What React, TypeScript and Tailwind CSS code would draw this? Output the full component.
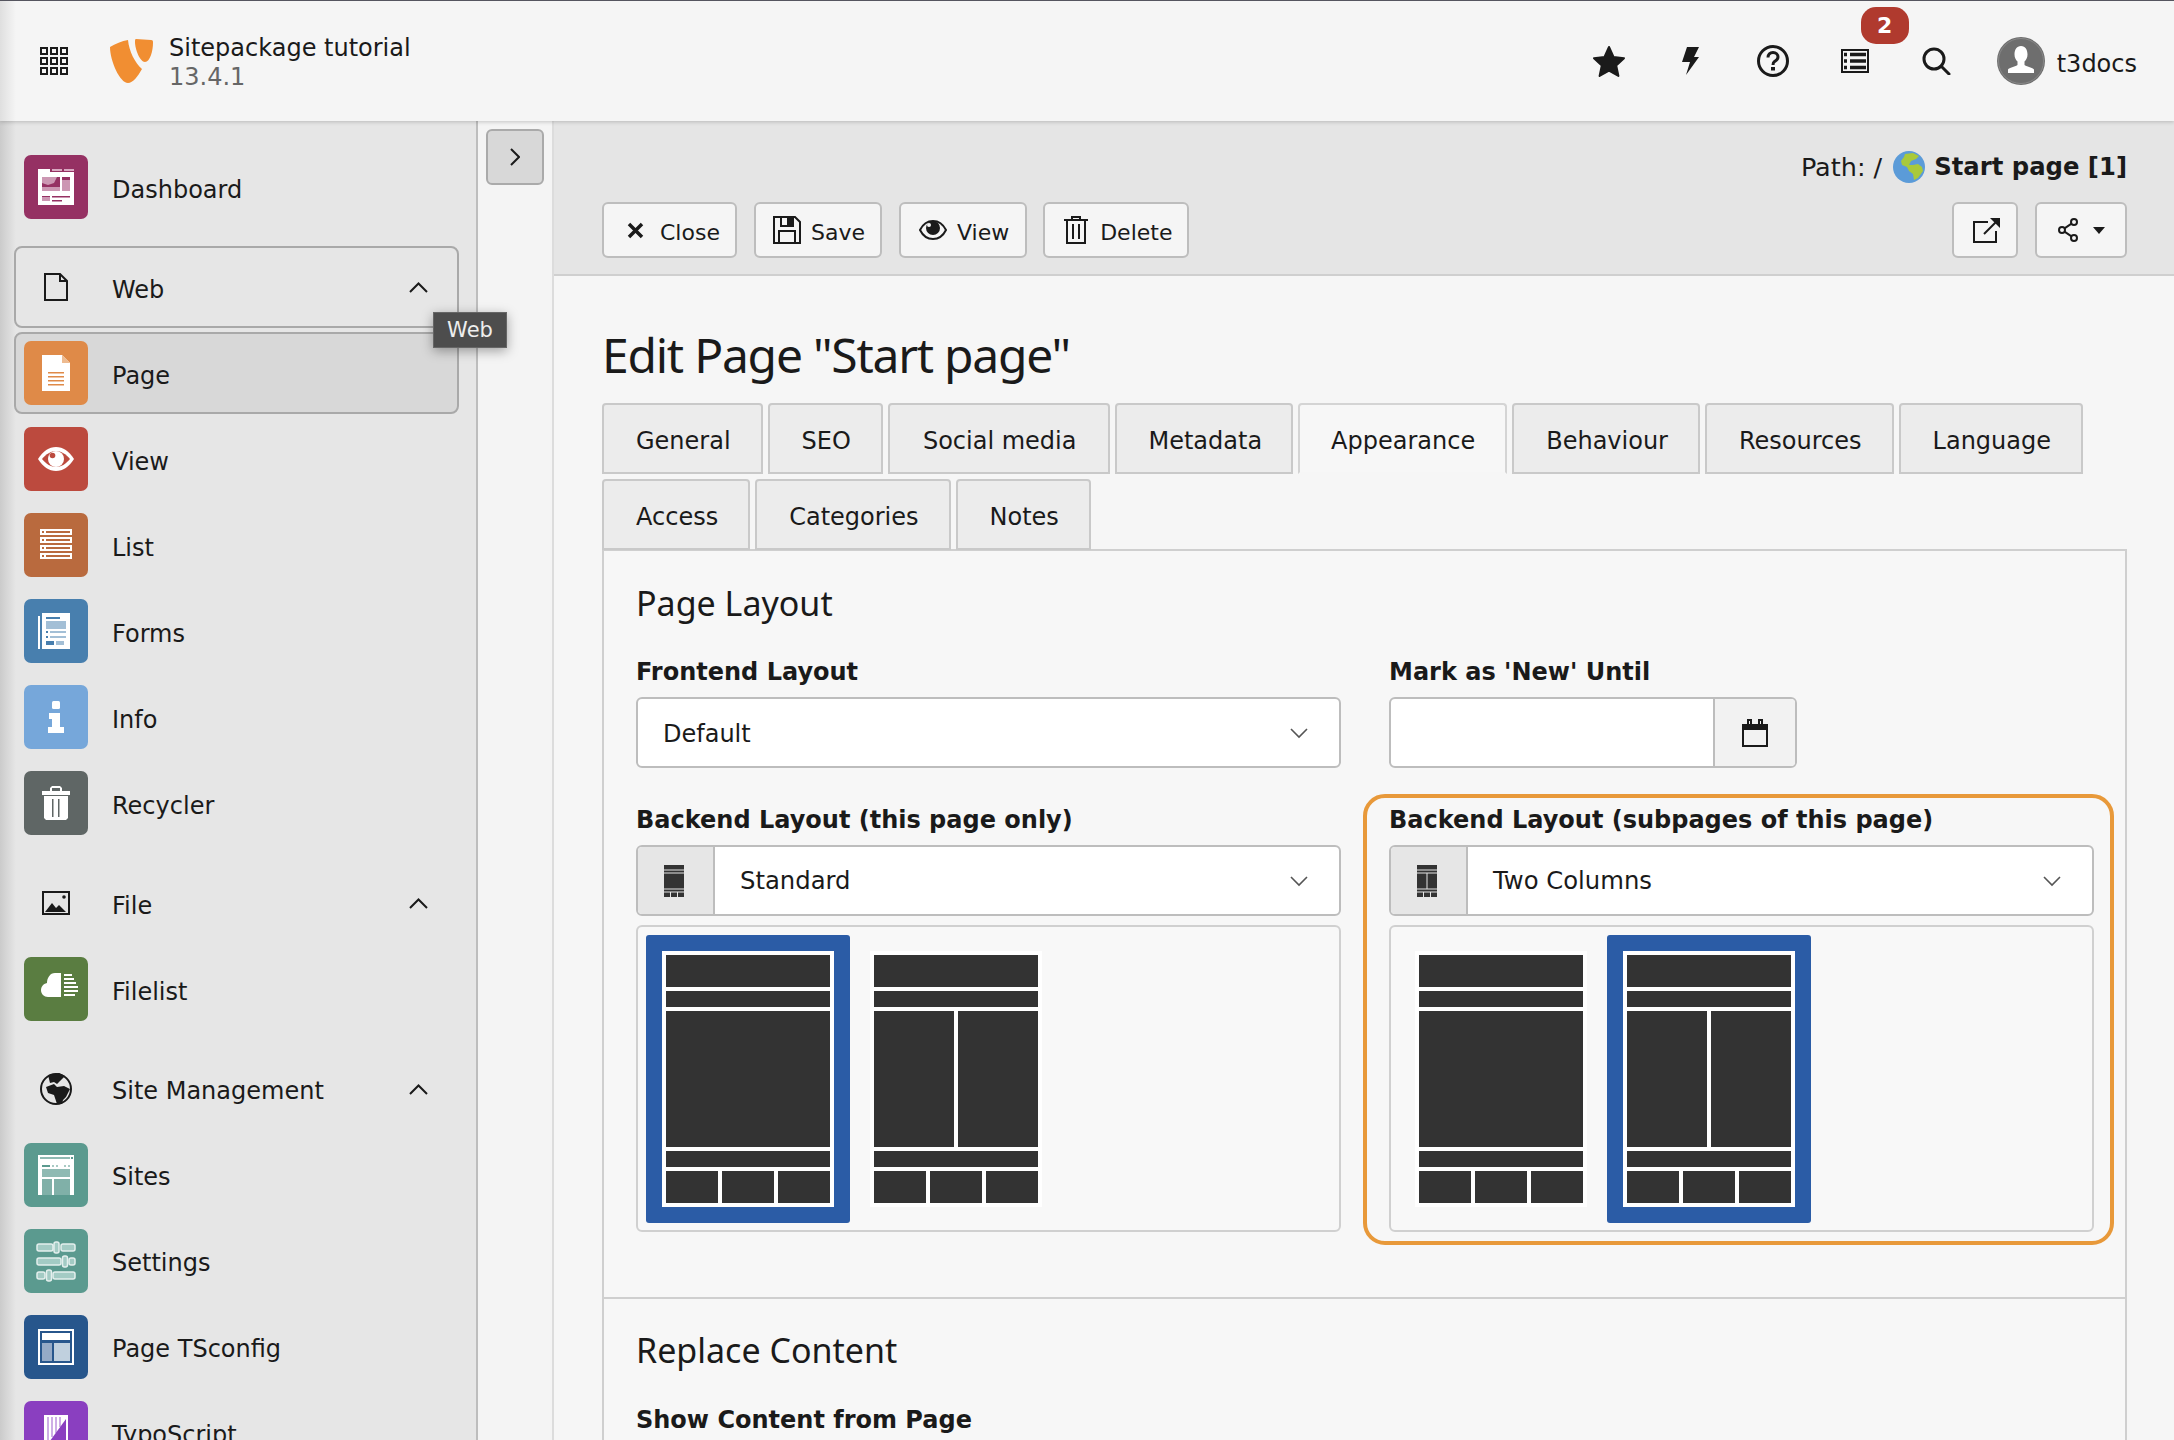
import { ReactNode } from "react";

const dejavu = "font-['DejaVu_Sans',sans-serif]";
const heading = "font-['Noto_Sans',sans-serif]";

function Chevron() {
  return (
    <svg width="19" height="12" viewBox="0 0 19 12" fill="none" stroke="#1a1a1a" strokeWidth="2">
      <path d="M1 11l8.500-8.500L18 11" />
    </svg>
  );
}

function SelectChevron() {
  return (
    <svg width="18" height="12" viewBox="0 0 18 12" fill="none" stroke="#555" strokeWidth="1.6">
      <path d="M1 2l8 8 8-8" />
    </svg>
  );
}

function Tile({ bg, children }: { bg: string; children: ReactNode }) {
  return (
    <div className={`flex h-16 w-16 shrink-0 items-center justify-center rounded-[7px] ${bg}`}>
      <svg width="64" height="64" viewBox="0 0 64 64">
        {children}
      </svg>
    </div>
  );
}

const icons: Record<string, ReactNode> = {
  dashboard: (
    <Tile bg="bg-[#953163]">
      <path d="M14 14h12v3h24v33H14z" fill="#fff" />
      <path d="M28 14h10v2H28zM40 14h10v2H40z" fill="#d9a9c2" />
      <path d="M18 22h18v14H18z" fill="#cc97b3" />
      <path d="M18 28l6 2 6-2 3-6h3v11H18z" fill="#953163" />
      <path d="M18 32h18v4H18z" fill="#cc97b3" />
      <path d="M38 22h8v14h-8z" fill="#cc97b3" />
      <path d="M38 22h8v3h-8z" fill="#953163" />
      <path d="M18 41h8v5h-8z" fill="#cc97b3" />
      <path d="M18 41h8v1H18zM28 41h18v1.500H28zM28 45h10v1.500H28z" fill="#953163" />
    </Tile>
  ),
  page: (
    <Tile bg="bg-[#df8a48]">
      <path d="M18 14h20l8 8v28H18z" fill="#fff" />
      <path d="M38 14l8 8h-8z" fill="#eebb90" />
      <path d="M24 31h16v1.500H24zM24 35h16v1.500H24zM24 39h16v1.500H24zM24 43h16v1.500H24z" fill="#df8a48" />
    </Tile>
  ),
  view: (
    <Tile bg="bg-[#bc4a3e]">
      <path d="M14 32c5-8 11-12 18-12s13 4 18 12c-5 8-11 12-18 12S19 40 14 32z" fill="#fff" />
      <path d="M18 32c4-5 9-8 14-8s10 3 14 8c-4 5-9 8-14 8s-10-3-14-8z" fill="#bc4a3e" />
      <circle cx="32" cy="32" r="8" fill="#fff" />
      <circle cx="28.500" cy="28.500" r="2.800" fill="#bc4a3e" />
    </Tile>
  ),
  list: (
    <Tile bg="bg-[#b96a3e]">
      {[16, 24, 32, 40].map((y) => (
        <g key={y}>
          <rect x="16" y={y} width="32" height="6" fill="#fff" />
          <rect x="18" y={y + 2} width="2" height="2" fill="#b96a3e" />
          <rect x="22" y={y + 2} width="24" height="2" fill="#b96a3e" />
        </g>
      ))}
    </Tile>
  ),
  forms: (
    <Tile bg="bg-[#487fae]">
      <path d="M14 17h2v33h-2z" fill="#fff" />
      <path d="M18 14h28v36H18z" fill="#fff" />
      <path d="M22 18h14v2H22z" fill="#487fae" />
      <path d="M22 22h20v8H22z" fill="#a3bfd6" />
      <path d="M22 32h2v2h-2zM22 37h2v2h-2z" fill="#487fae" />
      <path d="M26 32h16v2H26zM26 37h16v2H26z" fill="#a3bfd6" />
      <path d="M22 42h8v4h-8z" fill="#487fae" />
      <path d="M32 42h8v4h-8z" fill="#a3bfd6" />
    </Tile>
  ),
  info: (
    <Tile bg="bg-[#76a7da]">
      <rect x="28" y="16" width="8" height="8" rx="1.500" fill="#fff" />
      <path d="M25 28h11v14h4v6H24v-6h4v-8h-3z" fill="#fff" />
    </Tile>
  ),
  recycler: (
    <Tile bg="bg-[#5f6665]">
      <path d="M26 20v-3l2-2h8l2 2v3h8v4H18v-4z" fill="#fff" />
      <path d="M28 20v-3h8v3z" fill="#5f6665" />
      <path d="M20 25h24v22l-2 2H22l-2-2z" fill="#fff" />
      <path d="M28 28h1.500v18H28zM34 28h1.500v18H34z" fill="#5f6665" />
    </Tile>
  ),
  filelist: (
    <Tile bg="bg-[#5a7d41]">
      <path d="M37 16h-6c-5 0-8 5-8 10-4 1-6 4-6 7 0 4 3 7 7 7h13z" fill="#fff" />
      <path d="M40 17h8v2h-8zM40 21h10v2H40zM40 25h12v2H40zM40 29h14v2H40zM40 33h14v2H40zM40 37h11v2H40z" fill="#fff" />
    </Tile>
  ),
  sites: (
    <Tile bg="bg-[#5b9a8f]">
      <path d="M14 12h36v40H14z" fill="#fff" />
      <path d="M16 14h30v2H16z" fill="#8fbab3" />
      <path d="M47 14h2v2h-2z" fill="#5b9a8f" />
      <path d="M18 22h8v2h-8z" fill="#5b9a8f" />
      <path d="M28 22h2v2h-2zM32 22h2v2h-2zM40 22h2v2h-2zM44 22h2v2h-2z" fill="#a8cac4" />
      <path d="M18 26h28v8H18z" fill="#8fbab3" />
      <path d="M18 36h10v16H18zM30 36h16v16H30z" fill="#80b0a8" />
    </Tile>
  ),
  settings: (
    <Tile bg="bg-[#5b9a8f]">
      <g fill="#a3cbc4" stroke="#e4efed" strokeWidth="1.500">
        <rect x="13" y="15" width="16" height="7" rx="2" />
        <rect x="37" y="15" width="14" height="7" rx="2" />
        <rect x="13" y="29" width="24" height="7" rx="2" />
        <rect x="45" y="29" width="6" height="7" rx="2" />
        <rect x="13" y="43" width="8" height="7" rx="2" />
        <rect x="29" y="43" width="22" height="7" rx="2" />
        <rect x="30" y="13" width="5" height="11" rx="2" />
        <rect x="38.500" y="27" width="5" height="11" rx="2" />
        <rect x="22.500" y="41" width="5" height="11" rx="2" />
      </g>
    </Tile>
  ),
  tsconfig: (
    <Tile bg="bg-[#27568c]">
      <rect x="15" y="15" width="34" height="34" fill="none" stroke="#fff" strokeWidth="2" />
      <path d="M18 18h28v7H18z" fill="#fff" />
      <path d="M18 28h10v18H18z" fill="#95aac6" />
      <path d="M30 28h16v18H30z" fill="#c0d0de" />
    </Tile>
  ),
  typoscript: (
    <Tile bg="bg-[#8a3fc0]">
      <path d="M20 14h24v40H20z" fill="#fff" />
      <path d="M23 16h2v26h-2zM27 16h2v20h-2zM31 16h2v16h-2zM35 16h2v10h-2z" fill="#cdaee6" />
      <path d="M23 44L42 18v26z" fill="#8a3fc0" />
    </Tile>
  ),
};

function DocOutline() {
  return (
    <svg width="64" height="64" viewBox="0 0 64 64" fill="none" stroke="#1a1a1a" strokeWidth="2">
      <path d="M21 19h15l7 7v19H21zM36 19v7h7" />
    </svg>
  );
}

function ImageOutline() {
  return (
    <svg width="64" height="64" viewBox="0 0 64 64">
      <rect x="19" y="21" width="26" height="22" fill="none" stroke="#1a1a1a" strokeWidth="2" />
      <path d="M21 41l7-9 4 5 3-3 7 7z" fill="#1a1a1a" />
      <circle cx="40" cy="26" r="1.800" fill="#1a1a1a" />
    </svg>
  );
}

function GlobeBlack() {
  return (
    <svg width="64" height="64" viewBox="0 0 64 64">
      <circle cx="32" cy="32" r="15" fill="#e6e6e6" stroke="#1a1a1a" strokeWidth="2" />
      <path d="M24 18l11-2 6 3-5 5-3 3-3-2-4 1-1-4zM22 30l8-3 3 3 7-1 6 3-4 8-3 3-1 4-5 0-3-9-6-2z" fill="#1a1a1a" />
    </svg>
  );
}

function NavRow({ label, icon, active, chevron, boxed }: { label: string; icon: ReactNode; active?: boolean; chevron?: boolean; boxed?: boolean }) {
  return (
    <div className="h-[86px] pl-[14px] pr-[17px] py-[2px]">
      <div
        className={`flex h-[82px] items-center rounded-[8px] border-2 pl-[8px] pr-[29px] ${active ? "border-[#a9a9a9] bg-[#d8d8d8]" : boxed ? "border-[#a9a9a9]" : "border-transparent"}`}
      >
        {icon}
        <span className="ml-[24px] flex-1 pt-[5px] text-[24px] text-[#1a1a1a]">{label}</span>
        {chevron && <Chevron />}
      </div>
    </div>
  );
}

function Sidebar() {
  return (
    <aside className="relative h-full w-[478px] shrink-0 border-r-2 border-[#bdbdbd] bg-[linear-gradient(to_right,#cbcbcb,#e6e6e6_16px)] pt-[23px]">
      <NavRow label="Dashboard" icon={icons.dashboard} />
      <div className="mt-[14px]">
        <NavRow label="Web" icon={<DocOutline />} chevron boxed />
        <NavRow label="Page" icon={icons.page} active />
        <NavRow label="View" icon={icons.view} />
        <NavRow label="List" icon={icons.list} />
        <NavRow label="Forms" icon={icons.forms} />
        <NavRow label="Info" icon={icons.info} />
        <NavRow label="Recycler" icon={icons.recycler} />
      </div>
      <div className="mt-[14px]">
        <NavRow label="File" icon={<ImageOutline />} chevron />
        <NavRow label="Filelist" icon={icons.filelist} />
      </div>
      <div className="mt-[13.500px]">
        <NavRow label="Site Management" icon={<GlobeBlack />} chevron />
        <NavRow label="Sites" icon={icons.sites} />
        <NavRow label="Settings" icon={icons.settings} />
        <NavRow label="Page TSconfig" icon={icons.tsconfig} />
        <NavRow label="TypoScript" icon={icons.typoscript} />
      </div>
      {/* tooltip */}
      <div className="absolute left-[433px] top-[191px] flex h-[36px] w-[74px] items-center justify-center border border-[#666] bg-[#4d4d4d] pt-[2px] text-[21px] text-[#eee] shadow-[0_3px_12px_rgba(0,0,0,0.35)]">
        Web
      </div>
    </aside>
  );
}

function TopBar() {
  return (
    <header className="relative z-10 flex h-[121px] shrink-0 items-center border-t border-[#55555f] bg-[linear-gradient(to_right,#dfdfdf,#f5f5f5_16px)] shadow-[0_1px_4px_rgba(0,0,0,0.2)]">
      <svg className="ml-[40px]" width="28" height="28" viewBox="0 0 28 28" fill="none" stroke="#1a1a1a" strokeWidth="2">
        {[0, 10, 20].map((y) => [0, 10, 20].map((x) => <rect key={`${x}-${y}`} x={x + 1} y={y + 1} width="6" height="6" />))}
      </svg>
      <svg className="ml-[42px]" width="43" height="44" viewBox="0 0 43 44" fill="#f18e32">
        <path d="M0 8C5 5 12 2 18 1 19 12 25 24 32 30 28 37 23 44 18 44 10 44 0 22 0 8Z" />
        <path d="M26 0L41 1C43 1 43 2 43 4 43 12 40 23 35 23 30 23 25 10 25 3 25 1 25 0 26 0Z" />
      </svg>
      <div className="ml-[16px] mt-[4px]">
        <div className="text-[24px] leading-[29px] text-[#1a1a1a]">Sitepackage tutorial</div>
        <div className="text-[24px] leading-[29px] text-[#666]">13.4.1</div>
      </div>
      <div className="ml-auto flex items-center -mt-[1px]">
        <svg width="34" height="32" viewBox="0 0 34 32" fill="#1a1a1a" stroke="#1a1a1a" strokeWidth="2" strokeLinejoin="round">
          <path d="M17 2l4.500 10 10.500 1.200-7.800 7.200L26.400 31 17 25.700 7.600 31l2.200-10.600L2 13.200 12.500 12z" />
        </svg>
        <svg className="ml-[56px]" width="17" height="28" viewBox="0 0 17 28" fill="#1a1a1a">
          <path d="M5 0h12l-5 10h5L4 28l4-13H0z" />
        </svg>
        <svg className="ml-[58px]" width="32" height="32" viewBox="0 0 32 32" fill="none" stroke="#1a1a1a">
          <circle cx="16" cy="16" r="14.500" strokeWidth="3" />
          <path d="M11 12.500c0-3 2-5 5-5s5 2 5 4.500-2 3.500-3.500 4.500c-1 .7-1.500 1.500-1.500 3.500" strokeWidth="3" />
          <rect x="14" y="22" width="4" height="3.500" fill="#1a1a1a" stroke="none" />
        </svg>
        <div className="relative ml-[52px] h-[24px] w-[28px]">
          <svg width="28" height="24" viewBox="0 0 28 24" fill="none" stroke="#1a1a1a" strokeWidth="2">
            <rect x="1" y="1" width="26" height="22" />
            <path d="M3 5.500h3M9 5.500h16M3 12h3M9 12h16M3 18.500h3M9 18.500h16" strokeWidth="3.500" />
          </svg>
          <span className="absolute left-[20px] top-[-42px] flex h-[37px] w-[48px] items-center justify-center rounded-[15px] bg-[#b03a2e] text-[22px] font-bold text-white">
            2
          </span>
        </div>
        <svg className="ml-[53px]" width="29" height="28" viewBox="0 0 29 28" fill="none" stroke="#1a1a1a" strokeWidth="3">
          <circle cx="12" cy="12" r="10" />
          <path d="M19 19l8 8" strokeLinecap="round" />
        </svg>
        <svg className="ml-[46px]" width="48" height="48" viewBox="0 0 48 48">
          <circle cx="24" cy="24" r="24" fill="#6e6e6e" />
          <circle cx="24" cy="24" r="22.500" fill="none" stroke="#888" strokeWidth="1" />
          <path d="M24 9c4.500 0 6.500 4 6.500 8.500 0 3-1.300 5.500-3 7v3.500c3 2 8 2.500 9.500 4.500v3.500H11V32.500c1.500-2 6.500-2.500 9.500-4.500v-3.500c-1.700-1.500-3-4-3-7C17.500 13 19.500 9 24 9z" fill="#fff" />
        </svg>
        <span className="ml-[12px] mr-[37px] pt-[6px] text-[24px] text-[#1a1a1a]">t3docs</span>
      </div>
    </header>
  );
}

function ToolButton({ label, icon, className }: { label: string; icon: ReactNode; className: string }) {
  return (
    <button className={`flex h-[56px] items-center rounded-[6px] border-2 border-[#bdbdbd] bg-[#f5f5f5] text-[22px] text-[#1a1a1a] ${className}`}>
      {icon}
      <span className="pt-[4px]">{label}</span>
    </button>
  );
}

function Toolbar() {
  return (
    <div className="h-[155px] shrink-0 border-b-2 border-[#cfcfcf] bg-[#e5e5e5] pl-[48px] pr-[47px] pt-[30px]">
      <div className="flex h-[32px] items-center justify-end text-[#1a1a1a]">
        <span className="text-[25.500px]">Path: /</span>
        <svg className="ml-[11px]" width="32" height="32" viewBox="0 0 32 32">
          <circle cx="16" cy="16" r="16" fill="#5b9bd8" />
          <path d="M12 3l8-1 6 3-3 3-5 2-2 4 4 0 5-1 4 3 1 4-5 7-4 2-1-6-4-3-2-4-5-2-1-4 3-4z" fill="#a9c93a" />
        </svg>
        <span className="ml-[9px] text-[24.300px] font-bold">Start page [1]</span>
      </div>
      <div className="mt-[19px] flex items-center">
        <ToolButton
          label="Close"
          className="pl-[23px] pr-[15px]"
          icon={
            <svg className="mr-[16px]" width="17" height="17" viewBox="0 0 17 17" fill="none" stroke="#1a1a1a" strokeWidth="3.500">
              <path d="M2 2l13 13M15 2L2 15" />
            </svg>
          }
        />
        <ToolButton
          label="Save"
          className="ml-[17px] pl-[17px] pr-[15px]"
          icon={
            <svg className="mr-[10px]" width="28" height="28" viewBox="0 0 28 28" fill="none" stroke="#1a1a1a" strokeWidth="2">
              <path d="M1 1h21l5 5v21H1z" />
              <path d="M8 1v9h12V1M6 27V15h16v12" />
              <path d="M15 3h3v5h-3z" fill="#1a1a1a" />
            </svg>
          }
        />
        <ToolButton
          label="View"
          className="ml-[17px] pl-[18px] pr-[16px]"
          icon={
            <svg className="mr-[10px]" width="28" height="24" viewBox="0 0 28 24" fill="none">
              <path d="M1 12c3-6 8-9 13-9s10 3 13 9c-3 6-8 9-13 9S4 18 1 12z" stroke="#1a1a1a" strokeWidth="2" />
              <circle cx="14" cy="10" r="7" fill="#1a1a1a" />
              <circle cx="10" cy="7" r="2" fill="#f5f5f5" />
            </svg>
          }
        />
        <ToolButton
          label="Delete"
          className="ml-[16px] pl-[19px] pr-[15px]"
          icon={
            <svg className="mr-[12px]" width="24" height="28" viewBox="0 0 24 28" fill="none" stroke="#1a1a1a" strokeWidth="2">
              <path d="M0 4h24M8 4V1h8v3M3 4v23h18V4M9 8v15M15 8v15" />
            </svg>
          }
        />
        <button className="ml-auto flex h-[56px] w-[66px] items-center justify-center rounded-[6px] border-2 border-[#bdbdbd] bg-[#f5f5f5] pl-[4px]">
          <svg width="28" height="26" viewBox="0 0 28 26" fill="none" stroke="#1a1a1a" strokeWidth="2">
            <path d="M15 5H1v20h22V14" />
            <path d="M11 17L25 3" />
            <path d="M17 1h10v10l-3-3-6-6z" fill="#1a1a1a" stroke="none" />
          </svg>
        </button>
        <button className="ml-[17px] flex h-[56px] w-[92px] items-center justify-center gap-[15px] rounded-[6px] border-2 border-[#bdbdbd] bg-[#f5f5f5]">
          <svg width="20" height="24" viewBox="0 0 20 24" fill="none" stroke="#1a1a1a" strokeWidth="2">
            <circle cx="4" cy="12" r="3" />
            <circle cx="16" cy="4" r="3" />
            <circle cx="16" cy="20" r="3" />
            <path d="M6.500 10.300L13.500 5.700M6.500 13.700l7 4.600" />
          </svg>
          <svg width="12" height="7" viewBox="0 0 12 7" fill="#1a1a1a">
            <path d="M0 0h12L6 7z" />
          </svg>
        </button>
      </div>
    </div>
  );
}

function Tab({ label, active, pad = "pl-[32px] pr-[30px]" }: { label: string; active?: boolean; pad?: string }) {
  return (
    <div
      className={`flex h-[71px] items-center rounded-t-[4px] border-2 pt-[4px] text-[24px] text-[#1a1a1a] ${pad} ${active ? "border-[#d4d4d4] border-b-transparent bg-[#f7f7f7] [background-clip:padding-box]" : "border-[#c9c9c9] bg-[#ececec]"}`}
    >
      {label}
    </div>
  );
}

function Thumb({ cols }: { cols: 1 | 2 }) {
  return (
    <svg width="172" height="256" viewBox="0 0 172 256" className="block">
      <rect width="172" height="256" fill="#fff" />
      <g fill="#333">
        <rect x="4" y="4" width="164" height="32" />
        <rect x="4" y="40" width="164" height="16" />
        {cols === 1 ? (
          <rect x="4" y="60" width="164" height="136" />
        ) : (
          <>
            <rect x="4" y="60" width="80" height="136" />
            <rect x="88" y="60" width="80" height="136" />
          </>
        )}
        <rect x="4" y="200" width="164" height="16" />
        <rect x="4" y="220" width="52" height="32" />
        <rect x="60" y="220" width="52" height="32" />
        <rect x="116" y="220" width="52" height="32" />
      </g>
    </svg>
  );
}

function MiniThumb({ cols }: { cols: 1 | 2 }) {
  return (
    <svg width="20" height="32" viewBox="0 0 20 32">
      <g fill="#333">
        <rect width="20" height="4.500" />
        <rect y="5.500" width="20" height="2" />
        {cols === 1 ? (
          <rect y="8.500" width="20" height="15" />
        ) : (
          <>
            <rect y="8.500" width="9.500" height="15" />
            <rect x="10.500" y="8.500" width="9.500" height="15" />
          </>
        )}
        <rect y="24.500" width="20" height="2" />
        <rect y="27.500" width="6" height="4.500" />
        <rect x="7" y="27.500" width="6" height="4.500" />
        <rect x="14" y="27.500" width="6" height="4.500" />
      </g>
    </svg>
  );
}

function LayoutField({ label, value, cols, pick }: { label: string; value: string; cols: 1 | 2; pick: 0 | 1 }) {
  return (
    <>
      <div className="flex h-[32px] items-center text-[24px] font-bold text-[#1a1a1a]">{label}</div>
      <div className="mt-[9px] flex h-[71px] items-center rounded-[6px] border-2 border-[#bdbdbd] bg-white">
        <div className="flex h-full w-[77px] items-center justify-center rounded-l-[4px] border-r-2 border-[#bdbdbd] bg-[#e6e6e6] pr-[4px]">
          <MiniThumb cols={cols} />
        </div>
        <span className="ml-[25px] flex-1 pt-[2px] text-[24.300px] text-[#1a1a1a]">{value}</span>
        <span className="mr-[31px] flex">
          <SelectChevron />
        </span>
      </div>
      <div className="mt-[9px] flex h-[307px] gap-[4px] rounded-[6px] border-2 border-[#d0d0d0] bg-[#f8f8f8] p-[8px]">
        <div className={`h-[288px] rounded-[3px] p-[16px] ${pick === 0 ? "bg-[#2b5ca6]" : ""}`}>
          <Thumb cols={1} />
        </div>
        <div className={`h-[288px] rounded-[3px] p-[16px] ${pick === 1 ? "bg-[#2b5ca6]" : ""}`}>
          <Thumb cols={2} />
        </div>
      </div>
    </>
  );
}

export default function App() {
  return (
    <div className={`flex h-[1440px] w-full flex-col overflow-hidden bg-[#f5f5f5] ${dejavu}`}>
      <TopBar />
      <div className="flex min-h-0 flex-1">
        <Sidebar />
        <div className="w-[76px] shrink-0 border-r-2 border-[#dcdcdc] bg-[#f4f4f4] pl-[8px] pt-[8px]">
          <button className="flex h-[56px] w-[58px] items-center justify-center rounded-[6px] border-2 border-[#aaa] bg-[#d8d8d8]">
            <svg width="10" height="18" viewBox="0 0 10 18" fill="none" stroke="#1a1a1a" strokeWidth="2">
              <path d="M1 1l8 8-8 8" />
            </svg>
          </button>
        </div>

        <main className="flex min-w-0 flex-1 flex-col">
          <Toolbar />
          <div className="flex-1 bg-[#f6f6f6] pl-[48px] pr-[47px] pt-[49px]">
            <h1 className={`h-[60px] text-[48px] leading-[60px] tracking-[-1.250px] text-[#1a1a1a] ${heading}`}>Edit Page "Start page"</h1>

            <div className="mt-[18px] flex flex-wrap gap-[5px]">
              <Tab label="General" />
              <Tab label="SEO" />
              <Tab label="Social media" pad="pl-[33px] pr-[32px]" />
              <Tab label="Metadata" pad="pl-[31px] pr-[29px]" />
              <Tab label="Appearance" active pad="pl-[31px] pr-[30px]" />
              <Tab label="Behaviour" />
              <Tab label="Resources" />
              <Tab label="Language" />
              <Tab label="Access" />
              <Tab label="Categories" />
              <Tab label="Notes" />
            </div>

            <div className="-mt-[1px] border-2 border-[#cfcfcf] bg-[#f7f7f7]">
              {/* page layout */}
              <section className="border-b-2 border-[#cfcfcf] px-[32px] pb-[65px] pt-[30px]">
                <h2 className={`h-[44px] text-[34px] leading-[44px] text-[#1a1a1a] ${heading}`}>Page Layout</h2>
                <div className="mt-[31px] grid grid-cols-[705px_705px] gap-x-[48px]">
                  <div>
                    <div className="flex h-[32px] items-center text-[24px] font-bold text-[#1a1a1a]">Frontend Layout</div>
                    <div className="mt-[9px] flex h-[71px] items-center justify-between rounded-[6px] border-2 border-[#bdbdbd] bg-white pl-[25px] pr-[31px] text-[24px] text-[#1a1a1a]">
                      <span className="pt-[2px]">Default</span>
                      <SelectChevron />
                    </div>
                  </div>
                  <div>
                    <div className="flex h-[32px] items-center text-[24px] font-bold text-[#1a1a1a]">Mark as 'New' Until</div>
                    <div className="mt-[9px] flex h-[71px] w-[408px] items-center rounded-[6px] border-2 border-[#bdbdbd] bg-white">
                      <div className="flex-1" />
                      <div className="flex h-full w-[82px] items-center justify-center rounded-r-[4px] border-l-2 border-[#bdbdbd] bg-[#f2f2f2]">
                        <svg width="26" height="28" viewBox="0 0 26 28" fill="none" stroke="#1a1a1a" strokeWidth="2">
                          <path d="M1 6h24v21H1z" />
                          <path d="M1 6h24v4H1z" fill="#1a1a1a" />
                          <path d="M6 1h3v5H6zM17 1h3v5h-3z" fill="#f2f2f2" />
                        </svg>
                      </div>
                    </div>
                  </div>
                  <div className="mt-[36px]">
                    <LayoutField label="Backend Layout (this page only)" value="Standard" cols={1} pick={0} />
                  </div>
                  <div className="relative mt-[36px]">
                    <LayoutField label="Backend Layout (subpages of this page)" value="Two Columns" cols={2} pick={1} />
                    {/* orange highlight around the field */}
                    <div className="pointer-events-none absolute -bottom-[13px] -left-[26px] -right-[20px] -top-[10px] rounded-[22px] border-[4px] border-[#e8993a]" />
                  </div>
                </div>
              </section>

              {/* replace content */}
              <section className="px-[32px] pb-[20px] pt-[29px]">
                <h2 className={`h-[44px] text-[34px] leading-[44px] text-[#1a1a1a] ${heading}`}>Replace Content</h2>
                <div className="mt-[32px] flex h-[32px] items-center text-[24px] font-bold text-[#1a1a1a]">Show Content from Page</div>
              </section>
            </div>
          </div>
        </main>
      </div>
    </div>
  );
}
